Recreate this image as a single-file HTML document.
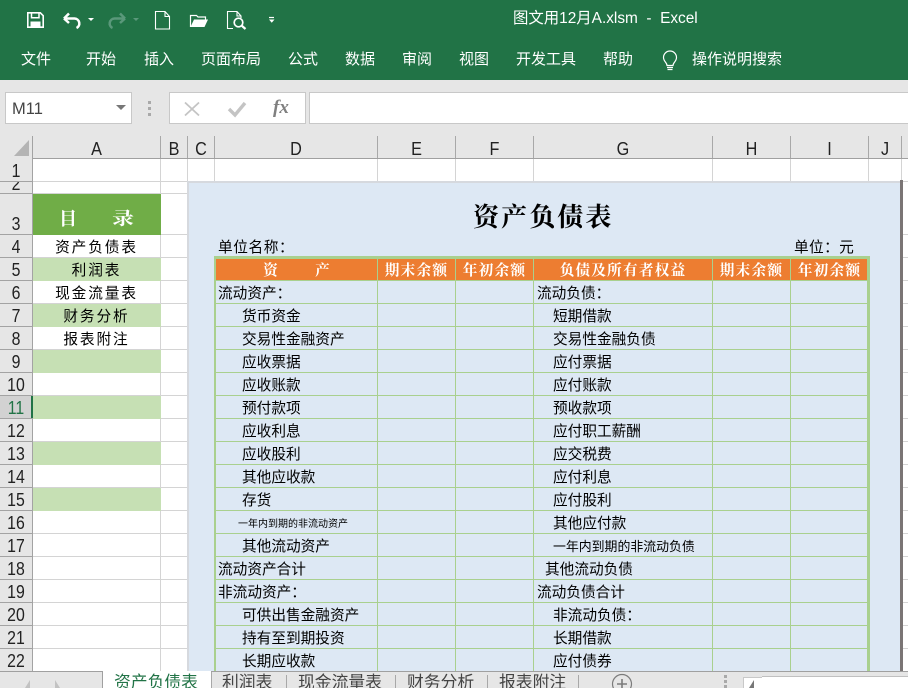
<!DOCTYPE html>
<html lang="zh"><head><meta charset="utf-8"><title>Excel</title>
<style>
html,body{margin:0;padding:0;width:908px;height:688px;overflow:hidden;background:#fff}
#r{position:relative;width:908px;height:688px;overflow:hidden;font-family:"Liberation Sans","Noto Sans CJK SC",sans-serif}
#r div,#r span,#r svg{position:absolute}
.m{top:50px;height:20px;line-height:20px;color:#fff;font-size:15px;font-family:"Liberation Sans","Noto Sans CJK SC",sans-serif;white-space:nowrap}
.rh{left:0;width:32px;height:20px;line-height:20px;text-align:center;font-size:18px;color:#222;transform:scaleX(.88)}
.rl{left:0;width:32px;height:1px;background:#a3a3a3}
.ch{top:139px;height:20px;line-height:20px;text-align:center;font-size:18px;color:#222;transform:scaleX(.9)}
.cs{top:136px;width:1px;height:22px;background:#a8a8a8}
.gv{width:1px;background:#d4d4d4}
.tv{top:259px;height:412px;width:1px;background:#a9d08e}
.f{left:33px;width:127.5px;height:23px;background:#c6e0b4}
.c{height:22px;line-height:22px;margin-top:1px;font-size:14.67px;color:#000;white-space:nowrap;font-family:"WenQuanYi Zen Hei","Noto Sans CJK SC",sans-serif}
.a{left:33px;width:127px;text-align:center;letter-spacing:1.9px}
.h{top:259px;height:21px;line-height:21px;color:#fff;font-weight:700;font-size:14.67px;letter-spacing:1.2px;text-align:center;white-space:nowrap;font-family:"Noto Serif CJK SC",serif}
.t{height:20px;line-height:20px;font-size:16.8px;color:#444;white-space:nowrap}
.sp{width:1px;height:13px;background:#a8a8a8}
</style></head><body><div id="r">

<div style="left:0;top:0;width:908px;height:80px;background:#217346"></div>
<div style="left:0;top:80px;width:908px;height:56px;background:#e6e6e6"></div>

<svg style="left:0;top:0" width="290" height="36" viewBox="0 0 290 36" fill="none">
<path d="M27.800 12.800h12.500l2.900 2.900v11.500h-15.400z" stroke="#fff" stroke-width="1.600"/>
<path d="M31.500 12.800v5h7.500v-5" stroke="#fff" stroke-width="1.500"/>
<rect x="30.500" y="21.500" width="10" height="6" fill="#fff"/>
<path d="M64 18.500l5-5M64 18.500l5 4.500M65 18.500h9.500a5 5 0 0 1 2 9.500" stroke="#fff" stroke-width="2.500"/>
<path d="M88 18h6l-3 3z" fill="#fff"/>
<path d="M125 18.500l-5-5M125 18.500l-5 4.500M124 18.500h-9.500a5 5 0 0 0-2 9.500" stroke="#5a987a" stroke-width="2.500"/>
<path d="M133 18h6l-3 3z" fill="#5a987a"/>
<path d="M155.500 11.500h9.500l4.500 5v12.500h-14zM165 11.500v5h4.500" stroke="#fff" stroke-width="1.100"/>
<path d="M190.500 27v-11.500h6l1.500 1.500h7.500v2.500" stroke="#fff" stroke-width="1.200"/>
<path d="M190.500 27l3.500-7.500h14l-3.500 7.500z" fill="#fff"/>
<path d="M233 28.500h-5.500v-17h9.500l4 4.500v2M237 11.500v4.500h4" stroke="#fff" stroke-width="1.100"/>
<circle cx="238.500" cy="22.500" r="4.300" stroke="#fff" stroke-width="1.700"/>
<path d="M241.500 25.500l4 3.500" stroke="#fff" stroke-width="2.200"/>
<path d="M269 17.500h5" stroke="#fff" stroke-width="1.200"/>
<path d="M269 19.500h5.500l-2.750 3.200z" fill="#fff"/>
</svg>

<div style="left:513px;top:8px;height:21px;line-height:21px;color:#fff;font-size:15.4px;white-space:pre;font-family:'Liberation Sans','Noto Sans CJK SC',sans-serif">图文用12月A.xlsm  -  Excel</div>

<div class="m" style="left:21px">文件</div>
<div class="m" style="left:86px">开始</div>
<div class="m" style="left:144px">插入</div>
<div class="m" style="left:201px">页面布局</div>
<div class="m" style="left:288px">公式</div>
<div class="m" style="left:345px">数据</div>
<div class="m" style="left:402px">审阅</div>
<div class="m" style="left:459px">视图</div>
<div class="m" style="left:516px">开发工具</div>
<div class="m" style="left:603px">帮助</div>
<svg style="left:660px;top:49px" width="20" height="24" viewBox="0 0 20 24" fill="none" stroke="#fff" stroke-width="1.200">
<path d="M7 16.500c0-3-3.500-4-3.500-8a6.500 6.500 0 0 1 13 0c0 4-3.500 5-3.500 8z"/><path d="M7 18.500h6M7.500 20.500h5" stroke-width="1.300"/></svg>
<div class="m" style="left:692px">操作说明搜索</div>

<div style="left:5px;top:92px;width:125px;height:30px;background:#fff;border:1px solid #c8c8c8"></div>
<div style="left:12px;top:99px;height:20px;line-height:20px;font-size:16.5px;color:#444">M11</div>
<svg style="left:115px;top:104px" width="12" height="8"><path d="M1 1h10l-5 5z" fill="#777"/></svg>
<svg style="left:146px;top:98px" width="8" height="20"><g fill="#a9a9a9"><rect x="2" y="3" width="3" height="3"/><rect x="2" y="9" width="3" height="3"/><rect x="2" y="15" width="3" height="3"/></g></svg>
<div style="left:169px;top:92px;width:135px;height:30px;background:#fff;border:1px solid #c8c8c8"></div>
<svg style="left:180px;top:98px" width="120" height="22" fill="none">
<path d="M5 4.500l14 13M19 4.500L5 17.500" stroke="#c4c4c4" stroke-width="1.800"/>
<path d="M49 11l6 6 10-12" stroke="#c4c4c4" stroke-width="3.400"/></svg>
<div style="left:273px;top:96px;height:24px;line-height:24px;font-size:19px;font-style:italic;font-weight:700;color:#808080;font-family:'Liberation Serif',serif">fx</div>
<div style="left:309px;top:92px;width:599px;height:30px;background:#fff;border:1px solid #c8c8c8;border-right:0"></div>

<div style="left:0;top:136px;width:908px;height:22px;background:#e6e6e6"></div>
<div style="left:0;top:158px;width:908px;height:1px;background:#a0a0a0"></div>
<div style="left:0;top:136px;width:32px;height:535px;background:#e6e6e6"></div>
<div style="left:32px;top:136px;width:1px;height:535px;background:#a3a3a3"></div>
<svg style="left:13px;top:139px" width="17" height="18"><path d="M16 1v16H1z" fill="#b4b4b4"/></svg>

<div class="cs" style="left:160px"></div><div class="cs" style="left:187px"></div><div class="cs" style="left:214px"></div><div class="cs" style="left:377px"></div><div class="cs" style="left:455px"></div><div class="cs" style="left:533px"></div><div class="cs" style="left:712px"></div><div class="cs" style="left:790px"></div><div class="cs" style="left:868px"></div><div class="cs" style="left:901px"></div>
<div class="ch" style="left:33px;width:127px">A</div>
<div class="ch" style="left:161px;width:26px">B</div>
<div class="ch" style="left:188px;width:26px">C</div>
<div class="ch" style="left:215px;width:162px">D</div>
<div class="ch" style="left:378px;width:77px">E</div>
<div class="ch" style="left:456px;width:77px">F</div>
<div class="ch" style="left:534px;width:178px">G</div>
<div class="ch" style="left:713px;width:77px">H</div>
<div class="ch" style="left:791px;width:77px">I</div>
<div class="ch" style="left:869px;width:32px">J</div>

<div style="left:33px;top:234px;width:875px;height:437px;background:repeating-linear-gradient(to bottom,#d4d4d4 0,#d4d4d4 1px,#fff 1px,#fff 23px)"></div>
<div style="left:33px;top:181px;width:875px;height:1px;background:#d4d4d4"></div>
<div style="left:33px;top:193px;width:155px;height:1px;background:#d4d4d4"></div>
<div class="gv" style="left:160px;top:159px;height:512px"></div>
<div class="gv" style="left:187px;top:159px;height:22px"></div>
<div class="gv" style="left:214px;top:159px;height:22px"></div>
<div class="gv" style="left:377px;top:159px;height:22px"></div>
<div class="gv" style="left:455px;top:159px;height:22px"></div>
<div class="gv" style="left:533px;top:159px;height:22px"></div>
<div class="gv" style="left:712px;top:159px;height:22px"></div>
<div class="gv" style="left:790px;top:159px;height:22px"></div>
<div class="gv" style="left:868px;top:159px;height:22px"></div>
<div class="gv" style="left:901px;top:159px;height:512px"></div>

<div style="left:33px;top:194px;width:127.500px;height:41px;background:#70ad47"></div>
<div style="left:59px;top:206px;height:24px;line-height:24px;color:#fff;font-weight:700;font-size:18px;font-family:'Noto Serif CJK SC',serif">目</div>
<div style="left:112px;top:206px;height:24px;line-height:24px;color:#fff;font-weight:700;font-size:22px;font-family:'Noto Serif CJK SC',serif;transform:scaleY(.8)">录</div>
<div class="f" style="top:258px"></div><div class="f" style="top:304px"></div><div class="f" style="top:350px"></div><div class="f" style="top:396px"></div><div class="f" style="top:442px"></div><div class="f" style="top:488px"></div>
<div class="c a" style="top:235px">资产负债表</div>
<div class="c a" style="top:258px">利润表</div>
<div class="c a" style="top:281px">现金流量表</div>
<div class="c a" style="top:304px">财务分析</div>
<div class="c a" style="top:327px">报表附注</div>

<div style="left:187px;top:181px;width:713px;height:490px;background:#d6d9de"></div>
<div style="left:189px;top:183px;width:711px;height:488px;background:#dde8f4"></div>
<div style="left:900px;top:180px;width:3px;height:491px;background:#7a7575"></div>

<div style="left:213.500px;top:256px;width:656.500px;height:415px;background:#a9d08e"></div>
<div style="left:216px;top:259px;width:651px;height:412px;background:repeating-linear-gradient(to bottom,#ed7d31 0,#ed7d31 21px,#a9d08e 21px,#a9d08e 22px,#dde8f4 22px,#dde8f4 412px)"></div>
<div style="left:216px;top:303px;width:651px;height:368px;background:repeating-linear-gradient(to bottom,#a9d08e 0,#a9d08e 1px,#dde8f4 1px,#dde8f4 23px)"></div>
<div class="tv" style="left:377px"></div><div class="tv" style="left:455px"></div><div class="tv" style="left:533px"></div><div class="tv" style="left:712px"></div><div class="tv" style="left:790px"></div>

<div style="left:473px;top:198px;height:36px;line-height:36px;font-size:26px;letter-spacing:2.100px;font-weight:700;color:#000;white-space:nowrap;font-family:'Noto Serif CJK SC',serif">资产负债表</div>
<div class="c" style="left:218px;top:235px;letter-spacing:.6px">单位名称：</div>
<div class="c" style="left:794px;top:235px;letter-spacing:.4px">单位：元</div>

<div class="h" style="left:263px;width:16px">资</div>
<div class="h" style="left:315px;width:16px">产</div>
<div class="h" style="left:378px;width:77px">期末余额</div>
<div class="h" style="left:456px;width:77px">年初余额</div>
<div class="h" style="left:534px;width:178px">负债及所有者权益</div>
<div class="h" style="left:713px;width:77px">期末余额</div>
<div class="h" style="left:791px;width:77px">年初余额</div>

<div class="c" style="left:218px;top:281px">流动资产：</div><div class="c" style="left:537px;top:281px">流动负债：</div>
<div class="c" style="left:242px;top:304px">货币资金</div><div class="c" style="left:553px;top:304px">短期借款</div>
<div class="c" style="left:242px;top:327px">交易性金融资产</div><div class="c" style="left:553px;top:327px">交易性金融负债</div>
<div class="c" style="left:242px;top:350px">应收票据</div><div class="c" style="left:553px;top:350px">应付票据</div>
<div class="c" style="left:242px;top:373px">应收账款</div><div class="c" style="left:553px;top:373px">应付账款</div>
<div class="c" style="left:242px;top:396px">预付款项</div><div class="c" style="left:553px;top:396px">预收款项</div>
<div class="c" style="left:242px;top:419px">应收利息</div><div class="c" style="left:553px;top:419px">应付职工薪酬</div>
<div class="c" style="left:242px;top:442px">应收股利</div><div class="c" style="left:553px;top:442px">应交税费</div>
<div class="c" style="left:242px;top:465px">其他应收款</div><div class="c" style="left:553px;top:465px">应付利息</div>
<div class="c" style="left:242px;top:488px">存货</div><div class="c" style="left:553px;top:488px">应付股利</div>
<div class="c" style="left:238px;top:511px;font-size:10px">一年内到期的非流动资产</div><div class="c" style="left:553px;top:511px">其他应付款</div>
<div class="c" style="left:242px;top:534px">其他流动资产</div><div class="c" style="left:553px;top:534px;font-size:12.900px">一年内到期的非流动负债</div>
<div class="c" style="left:218px;top:557px">流动资产合计</div><div class="c" style="left:545px;top:557px">其他流动负债</div>
<div class="c" style="left:218px;top:580px">非流动资产：</div><div class="c" style="left:537px;top:580px">流动负债合计</div>
<div class="c" style="left:242px;top:603px">可供出售金融资产</div><div class="c" style="left:553px;top:603px">非流动负债：</div>
<div class="c" style="left:242px;top:626px">持有至到期投资</div><div class="c" style="left:553px;top:626px">长期借款</div>
<div class="c" style="left:242px;top:649px">长期应收款</div><div class="c" style="left:553px;top:649px">应付债券</div>

<div style="left:0;top:396px;width:32px;height:22px;background:#d2d2d2"></div>
<div style="left:31px;top:396px;width:2px;height:22px;background:#217346"></div>
<div class="rl" style="top:181px"></div><div class="rl" style="top:193px"></div><div class="rl" style="top:234px"></div><div class="rl" style="top:257px"></div><div class="rl" style="top:280px"></div><div class="rl" style="top:303px"></div><div class="rl" style="top:326px"></div><div class="rl" style="top:349px"></div><div class="rl" style="top:372px"></div><div class="rl" style="top:395px"></div><div class="rl" style="top:418px"></div><div class="rl" style="top:441px"></div><div class="rl" style="top:464px"></div><div class="rl" style="top:487px"></div><div class="rl" style="top:510px"></div><div class="rl" style="top:533px"></div><div class="rl" style="top:556px"></div><div class="rl" style="top:579px"></div><div class="rl" style="top:602px"></div><div class="rl" style="top:625px"></div><div class="rl" style="top:648px"></div>
<div class="rh" style="top:161px">1</div>
<div style="left:0;top:182px;width:32px;height:11px;overflow:hidden"><div class="rh" style="top:-8px">2</div></div>
<div class="rh" style="top:214px">3</div>
<div class="rh" style="top:237px">4</div>
<div class="rh" style="top:260px">5</div>
<div class="rh" style="top:283px">6</div>
<div class="rh" style="top:306px">7</div>
<div class="rh" style="top:329px">8</div>
<div class="rh" style="top:352px">9</div>
<div class="rh" style="top:375px">10</div>
<div class="rh" style="top:398px;color:#217346">11</div>
<div class="rh" style="top:421px">12</div>
<div class="rh" style="top:444px">13</div>
<div class="rh" style="top:467px">14</div>
<div class="rh" style="top:490px">15</div>
<div class="rh" style="top:513px">16</div>
<div class="rh" style="top:536px">17</div>
<div class="rh" style="top:559px">18</div>
<div class="rh" style="top:582px">19</div>
<div class="rh" style="top:605px">20</div>
<div class="rh" style="top:628px">21</div>
<div class="rh" style="top:651px">22</div>

<div style="left:0;top:671px;width:908px;height:17px;background:#e6e6e6;overflow:hidden">
<div style="left:0;top:0;width:908px;height:1px;background:#a0a0a0"></div>
<div style="left:102px;top:0;width:1px;height:17px;background:#a0a0a0"></div>
<div style="left:103px;top:0;width:108px;height:17px;background:#fff"></div>
<div style="left:211px;top:1px;width:1px;height:16px;background:#a8a8a8"></div>
<svg style="left:24px;top:8px" width="42" height="9"><path d="M6 1v8L1 9zM31 1v8l5 0z" fill="#c2c2c2"/></svg>
<div class="t" style="left:114px;top:2px;color:#217346">资产负债表</div>
<div class="t" style="left:222px;top:2px">利润表</div>
<div class="sp" style="left:286px;top:4px"></div>
<div class="t" style="left:298px;top:2px">现金流量表</div>
<div class="sp" style="left:395px;top:4px"></div>
<div class="t" style="left:407px;top:2px">财务分析</div>
<div class="sp" style="left:487px;top:4px"></div>
<div class="t" style="left:499px;top:2px">报表附注</div>
<div class="sp" style="left:578px;top:4px"></div>
<svg style="left:610px;top:0" width="26" height="17" fill="none" stroke="#7b7b7b"><circle cx="12" cy="13" r="9.500" stroke-width="1.200"/><path d="M12 8v10M7 13h10" stroke-width="1.600"/></svg>
<svg style="left:722px;top:3px" width="8" height="14"><g fill="#a9a9a9"><rect x="2" y="1" width="3" height="3"/><rect x="2" y="6" width="3" height="3"/><rect x="2" y="11" width="3" height="3"/></g></svg>
<div style="left:743px;top:6px;width:18px;height:11px;background:#fff;border:1px solid #c8c8c8;border-bottom:0"></div>
<svg style="left:748px;top:9px" width="8" height="8"><path d="M6 0v8H1z" fill="#777"/></svg>
<div style="left:762px;top:5px;width:146px;height:12px;background:#fff;border-top:1px solid #c0c0c0"></div>
</div>
</div></body></html>
